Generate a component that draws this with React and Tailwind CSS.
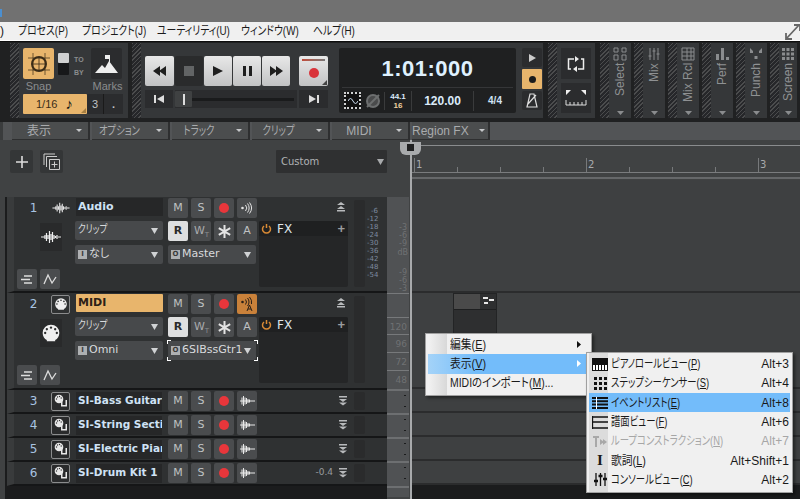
import React from 'react';

const HATCH = 'bg-[repeating-linear-gradient(135deg,#4b4c4d_0px,#4b4c4d_1px,#26272a_1px,#26272a_3px)]';
const JP = 'font-["Liberation_Sans","Noto_Sans_CJK_JP",sans-serif]';
const DV = 'font-["DejaVu_Sans","Noto_Sans_CJK_JP",sans-serif]';
const NL = 'inline-block origin-left scale-x-[.78]';
const NC = 'inline-block origin-center scale-x-[.78]';
const NB = 'inline-block origin-left scale-x-[.82]';
const NK = 'inline-block origin-left scale-x-[.9]';

function Tri({ c = '#d8d8d8', w = 8, h = 5, dir = 'down' }) {
  const p = dir === 'down' ? `0,0 ${w},0 ${w / 2},${h}` : `0,0 ${w},${h / 2} 0,${h}`;
  return <svg width={w} height={h} className="shrink-0"><polygon points={p} fill={c} /></svg>;
}

function Wave({ w = 20, h = 14, c = '#eee' }) {
  return (
    <svg width={w} height={h} viewBox="0 0 20 14">
      <path d="M0 7H4M4 5V9M5.500 3V11M7 5V9M8.500 1V13M10 4V10M11.500 2V12M13 5V9M14.500 6V8M16 5V9M17 7H20" stroke={c} strokeWidth="1.200" fill="none" />
    </svg>
  );
}

const Decay = () => (
  <svg width="15" height="10" viewBox="0 0 15 10" stroke="#e8e8e8" strokeWidth="1"><path d="M0 5h15M2 1.500v7M3.500 0v10M5 1.500v7M6.500 2v6M8 3v4M9.500 3.500v3" /></svg>
);

function Din({ s = 24, c = '#efefef', bg = '#2b2c2d' }) {
  return (
    <svg width={s} height={s} viewBox="0 0 24 24">
      <path d="M12 2a10 10 0 0 1 10 10c0 4-2 7-5 8.500v1.500H7v-1.500C4 19 2 16 2 12A10 10 0 0 1 12 2z" fill={c} />
      {[[5, 12], [7, 7.500], [12, 5.500], [17, 7.500], [19, 12]].map(([x, y]) => <circle key={x} cx={x} cy={y} r="1.400" fill={bg} />)}
    </svg>
  );
}

function InstIcon() {
  return (
    <span className="w-[19px] h-[19px] border border-[#8b8c8d] rounded-[2px] bg-[#2a2b2c] flex items-center justify-center shrink-0">
      <svg width="14" height="14" viewBox="0 0 14 14">
        <path d="M7 6v6.500h6V6h-1.500v5H8.500V6z" fill="#e8e8e8" />
        <circle cx="5" cy="5" r="4.300" fill="#e8e8e8" />
        {[[2.500, 5], [3.500, 3], [5.500, 2.500], [7.200, 4]].map(([x, y]) => <circle key={x} cx={x} cy={y} r=".7" fill="#333" />)}
      </svg>
    </span>
  );
}

function TB({ children, tone = 'bg-[#4a4c4e] text-[#bfc1c3]' }) {
  return <span className={`w-5 h-5 rounded-[2px] text-[11px] flex items-center justify-center shrink-0 relative ${DV} ${tone}`}>{children}</span>;
}

const Rec = () => <TB><span className="w-[10px] h-[10px] rounded-full bg-[#e8363b]" /></TB>;

function Mon({ auto }) {
  return (
    <TB tone={auto ? 'bg-[#c9813a]' : 'bg-[#4a4c4e]'}>
      <svg width="16" height="16" viewBox="0 0 16 16" fill="none" stroke={auto ? '#2a2018' : '#e4e4e4'} strokeWidth="1">
        <circle cx="3.500" cy={auto ? 6 : 8} r="1.300" fill={auto ? '#2a2018' : '#e4e4e4'} stroke="none" />
        <path d={auto ? 'M6.500 3.500a4 4 0 0 1 0 5M8.500 2a6 6 0 0 1 0 8M10.500 1a8 8 0 0 1 2 7' : 'M6.500 5a4.500 4.500 0 0 1 0 6M8.500 3.500a7 7 0 0 1 0 9M10.500 2.500a9 9 0 0 1 0 11'} />
        {auto && <path d="M8 15l2.500-6 2.500 6M9 13h3" />}
      </svg>
    </TB>
  );
}

function Select({ children, tag, w = 'w-[88px]', h = 'h-[19px]' }) {
  return (
    <div className={`${w} ${h} bg-[#47494b] rounded-[2px] flex items-center pl-[3px] pr-[5px] shrink-0`}>
      {tag && <span className={`w-[9px] h-[9px] bg-[#aeb0b2] text-[#3a3a3a] text-[7px] leading-[9px] font-bold text-center mr-[2px] ${DV}`}>{tag}</span>}
      <span className={`flex-1 text-[#d8dadc] text-[11px] whitespace-nowrap ${DV}`}>{children}</span>
      <Tri w={7} h={6} c="#d0d2d4" />
    </div>
  );
}

const SmallBtn = ({ children }) => <span className="w-5 h-5 rounded-[2px] bg-[#4a4c4e] flex items-center justify-center">{children}</span>;

function DblArrow({ up }) {
  return (
    <svg width="10" height="10" viewBox="0 0 10 10" fill="#b8babc">
      {up ? <path d="M5 0l4 3H1zM5 4l4 3H1zM1 8h8v1.500H1z" /> : <path d="M1 0h8v1.500H1zM1 3h8L5 6zM1 6.500h8L5 9.500z" />}
    </svg>
  );
}

function BigTrack({ n, name, big, nameOrange, auto, small, sel, out, scale, inp }) {
  return (
    <div className="flex bg-[#2f3132] border-b-2 border-b-[#151617] border-l-[7px] border-l-[#393b3c] pl-[13px] pt-[1px] h-full">
      <div className="w-[48px] relative shrink-0">
        <div className="flex items-center h-5">
          <span className={`w-[13px] text-center text-[12px] text-[#a9c4e2] ${DV}`}>{n}</span>
          <span className="ml-[11px] w-[19px] flex justify-center">{small}</span>
        </div>
        <div className="ml-[13px] mt-[5px] w-[22px] h-[28px] flex items-center justify-center bg-[#292a2b]">{big}</div>
      </div>
      <div className="w-[88px] flex flex-col shrink-0">
        <div className={`h-[18px] w-[87px] ml-px flex items-center pl-[2px] text-[11px] font-bold ${DV} ${nameOrange ? 'bg-[#e8b56c] text-[#2b2117] rounded-[1px]' : 'bg-[#262728] text-[#cfe2f5]'}`}>{name}</div>
        <div className="mt-[5px]"><Select><span className={NL}>クリップ</span></Select></div>
        <div className="mt-[5px]"><Select tag="I">{inp}</Select></div>
      </div>
      <div className="ml-[5px] w-[89px] flex flex-col shrink-0">
        <div className="flex gap-[3px]"><TB>M</TB><TB>S</TB><Rec /><Mon auto={auto} /></div>
        <div className="flex gap-[3px] mt-[3px]">
          <TB tone="bg-[#dedfe0] text-[#2a2a2a] font-bold">R</TB>
          <TB tone="bg-[#4a4c4e] text-[#a9abad]"><span className="-ml-[3px]">W</span><span className="absolute right-[2px] bottom-[1px] text-[7px] text-[#8c8e90]">T</span></TB>
          <TB>
            <svg width="13" height="13" stroke="#e4e4e4" strokeWidth="2"><path d="M6.500 0v13M.8 3.200l11.400 6.600M12.200 3.200L.8 9.800" /></svg>
          </TB>
          <TB>A</TB>
        </div>
        <div className="mt-[4px] relative">
          <Select tag="O">{out}</Select>
          {sel && <>
            <span className="absolute -left-[1px] -top-[1px] w-[4px] h-[4px] border-l border-t border-white" />
            <span className="absolute -right-[1px] -top-[1px] w-[4px] h-[4px] border-r border-t border-white" />
            <span className="absolute -left-[1px] -bottom-[1px] w-[4px] h-[4px] border-l border-b border-white" />
            <span className="absolute -right-[1px] -bottom-[1px] w-[4px] h-[4px] border-r border-b border-white" />
          </>}
        </div>
      </div>
      <div className="ml-[2px] w-[89px] shrink-0">
        <div className="h-[23px] flex items-start justify-end pr-[2px] pt-[4px]"><DblArrow up /></div>
        <div className="h-[66px] bg-[#252627] rounded-[2px]">
          <div className="h-[15px] bg-[#1f2021] flex items-center pl-[2px] pr-[3px] rounded-t-[2px]">
            <svg width="11" height="11" viewBox="0 0 11 11" fill="none" stroke="#d98a35" strokeWidth="1.500"><path d="M3 3a4 4 0 1 0 5 0M5.500 1v4" /></svg>
            <span className={`ml-[5px] flex-1 text-[#dfe5ea] text-[12px] ${DV}`}>FX</span>
            <span className="text-[#9a9c9e] text-[13px] leading-none font-bold">+</span>
          </div>
        </div>
      </div>
      <div className="ml-[6px] mt-[2px] w-[11px] h-[87px] bg-[#2a2b2c] rounded-[2px] shrink-0" />
      <div className={`ml-[2px] w-[11px] mt-[9px] text-[7px] leading-[8px] text-[#7e8ba0] text-right ${DV}`}>
        {scale && ['-6', '-12', '-18', '-24', '-30', '-36', '-42', '-48', '-54'].map(s => <div key={s}>{s}</div>)}
      </div>
    </div>
  );
}

function SmallTrack({ n, name, val }) {
  return (
    <div className="h-6 flex items-center bg-[#2f3132] border-b-2 border-b-[#151617] border-l-[7px] border-l-[#393b3c] pl-[13px]">
      <span className={`w-[13px] text-center text-[12px] text-[#a9c4e2] ${DV}`}>{n}</span>
      <span className="ml-[11px] w-[19px] flex justify-center"><InstIcon /></span>
      <span className="ml-[6px] w-[86px] h-[19px] bg-[#262728] flex items-center pl-[2px] text-[#cfe2f5] text-[10.500px] font-bold overflow-hidden whitespace-nowrap"><span className={DV}>{name}</span></span>
      <div className="ml-[6px] flex gap-[3px]"><TB>M</TB><TB>S</TB><Rec /><TB><Decay /></TB></div>
      <div className={`w-[76px] text-right text-[9px] text-[#9a9c9e] ${DV}`}>{val}</div>
      <span className="ml-[5px]"><DblArrow /></span>
      <span className="ml-[6px] w-[11px] h-[18px] bg-[#2a2b2c] rounded-[2px]" />
    </div>
  );
}

const Tab = ({ children, narrow, w = 'w-[78px]' }) => (
  <div className={`${w} h-[18px] bg-[#4b4d4e] border-r-2 border-b border-[#2e2f30] flex items-center text-[#a9abad] text-[12px] ${JP}`}>
    <span className="flex-1 text-center pr-[10px] whitespace-nowrap"><span className={narrow ? NC : ''}>{children}</span></span>
    <span className="mr-[6px]"><Tri w={6} h={3} c="#c5c7c9" /></span>
  </div>
);

function TBtn({ children, w = 'w-[28px]', dark }) {
  return <span className={`${w} h-[30px] rounded-[2px] flex items-center justify-center ${dark ? 'bg-[#2a2b2c]' : 'bg-gradient-to-b from-[#e8e8e8] to-[#c2c3c4]'}`}>{children}</span>;
}

const K = '#1f1f1f';

function SidePanel({ label, icon, last }) {
  return (
    <div className={`flex h-full shrink-0 ${last ? 'w-[27px]' : 'w-[31px]'}`}>
      <span className={`w-[9px] ${HATCH}`} />
      <div className="flex-1 bg-[#353739] flex flex-col items-center pt-[4px]">
        <span className="h-[14px] flex items-center">{icon}</span>
        <span className={`[writing-mode:vertical-rl] rotate-180 text-[#8f9193] text-[12px] mt-[2px] h-[41px] whitespace-nowrap text-right ${JP}`}>{label}</span>
        <span className="mt-auto mb-[3px]"><Tri w={7} h={4} c="#8a8c8e" /></span>
      </div>
    </div>
  );
}

const Ico = ({ d, fill }) => <svg width="14" height="14" viewBox="0 0 14 14" fill={fill ? '#8a8c8e' : 'none'} stroke={fill ? 'none' : '#8a8c8e'}><path d={d} /></svg>;

function Toolbar() {
  return (
    <div className="h-[80px] bg-[#202122] flex pl-[10px] pt-[1px] shrink-0 overflow-hidden">
      <div className="w-[118px] h-[75px] bg-[#353739] flex shrink-0">
        <span className={`w-[9px] ${HATCH}`} />
        <div className="pl-[4px] pt-[5px] flex flex-col">
          <div className="flex">
            <span className="w-[31px] h-[31px] rounded-[2px] bg-[#e8b56c] flex items-center justify-center">
              <svg width="24" height="24" viewBox="0 0 24 24" fill="none" stroke="#3a2c18"><path d="M1 6h22M1 18h22M6 1v22M18 1v22" strokeWidth=".7" /><circle cx="12" cy="12" r="7" strokeWidth="2" /><path d="M12 5v14M5 12h14" strokeWidth=".8" /></svg>
            </span>
            <span className="ml-[4px] mt-[5px] w-[11px] h-[22px] bg-[#17181a] rounded-[1px]"><span className="block h-[10px] bg-[#cfd0d1] rounded-[1px]" /></span>
            <span className={`ml-[5px] w-[10px] mt-[5px] text-[7px] text-[#8a8c8e] leading-[13px] font-bold ${JP}`}>TO<br />BY</span>
            <span className="ml-[7px] w-[31px] h-[31px] rounded-[2px] bg-[#2b2c2e] flex items-center justify-center">
              <svg width="26" height="24" viewBox="0 0 26 24" fill="#eee"><path d="M1 21l7-8 3 3 4-7 9 12z" /><rect x="11" y="3" width="5" height="4" /><rect x="15" y="3" width="1" height="7" /></svg>
            </span>
          </div>
          <div className={`flex text-[11px] text-[#8a8c8e] h-[15px] leading-[15px] ${JP}`}>
            <span className="w-[31px] text-center">Snap</span><span className="w-[38px]" /><span className="w-[31px] text-center">Marks</span>
          </div>
          <div className="flex">
            <span className={`relative w-[64px] h-[20px] bg-[#e8b56c] rounded-[1px] flex items-center text-[#3a2c18] text-[11px] pl-[13px] ${JP}`}>1/16<span className="ml-[8px] text-[15px] font-bold text-[#111]">♪</span><span className="absolute right-px bottom-px"><svg width="5" height="5"><path d="M5 0v5H0z" fill="#a67f42" /></svg></span></span>
            <span className="w-[36px] h-[20px] bg-[#2b2c2e] flex text-[#c0c2c4] text-[11px]"><span className="w-[17px] text-center leading-[20px] border-r border-[#1a1a1a]">3</span><span className="flex-1 text-center leading-[20px] font-bold">.</span></span>
          </div>
        </div>
      </div>
      <div className="ml-[4px] w-[411px] h-[75px] bg-[#353739] flex shrink-0">
        <span className={`w-[9px] ${HATCH}`} />
        <div className="pl-[4px] pt-[13px] w-[195px]">
          <div className="flex gap-px">
            <TBtn w="w-[29px]"><svg width="14" height="10" fill={K}><path d="M7 0v10L0 5zM13 0v10L6 5z" /></svg></TBtn>
            <TBtn dark><span className="w-[10px] h-[10px] bg-[#626465]" /></TBtn>
            <TBtn><svg width="10" height="10" fill={K}><path d="M0 0l10 5-10 5z" /></svg></TBtn>
            <TBtn><svg width="9" height="10" fill={K}><path d="M0 0h3v10H0zM6 0h3v10H6z" /></svg></TBtn>
            <TBtn><svg width="13" height="10" fill={K}><path d="M0 0l7 5-7 5zM6 0l7 5-7 5z" /></svg></TBtn>
            <span className="ml-[8px]"><TBtn w="w-[29px]">
              <span className="relative w-full h-full flex items-center justify-center"><span className="w-[10px] h-[10px] rounded-full bg-[#d9333a] mt-[3px]" /><span className="absolute left-[3px] right-[3px] top-[3px] h-[2px] bg-gradient-to-r from-[#c04a3a] to-[#777]" /><span className="absolute right-[1px] bottom-[1px]"><svg width="5" height="5"><path d="M5 0v5H0z" fill="#444" /></svg></span></span>
            </TBtn></span>
          </div>
          <div className="flex mt-[4px] h-[18px]">
            <span className="w-[28px] bg-[#2b2c2e] flex items-center justify-center"><svg width="10" height="8" fill="#ddd"><path d="M0 0h2v8H0zM10 0v8L3 4z" /></svg></span>
            <span className="ml-[2px] w-[122px] bg-[#2b2c2e] flex items-center">
              <span className="w-[17px] h-[16px] bg-[#3f4142] rounded-[1px] flex justify-center items-center"><span className="w-[2px] h-[11px] bg-[#ddd]" /></span>
              <span className="w-[102px] h-[3px] bg-[#1a1b1c]" />
            </span>
            <span className="ml-[2px] w-[29px] bg-[#2b2c2e] flex items-center justify-center"><svg width="10" height="8" fill="#ddd"><path d="M0 0l7 4-7 4zM8 0h2v8H8z" /></svg></span>
          </div>
        </div>
        <div className="ml-[3px] mt-[5px] w-[177px] h-[65px] bg-[#1f2021] rounded-[2px] flex flex-col shrink-0">
          <div className="h-[40px] border-b border-[#353638] mx-[3px] flex items-center justify-center text-[#dff1ff] text-[22px] font-bold font-['Liberation_Sans',sans-serif] tracking-[.5px] pt-[5px] pb-[3px]">1:01:000</div>
          <div className={`flex-1 flex items-center text-[#dbeafa] font-bold ${JP}`}>
            <span className="ml-[5px] w-[17px] h-[17px] bg-[#111] border-2 border-dotted border-[#cfd0d1] flex items-center justify-center"><svg width="10" height="6" fill="none" stroke="#cfe2f5"><path d="M0 3q2.500-5 5 0t5 0" /></svg></span>
            <svg className="ml-[4px]" width="16" height="16" fill="none" stroke="#6d6f70" strokeWidth="2"><circle cx="8" cy="8" r="6" fill="#4a4b4c" /><path d="M2 14L14 2" /></svg>
            <span className="ml-[3px] w-[27px] text-[8px] leading-[9px] text-center border-l border-[#3a3b3c]">44.1<br /><span className="text-[#f0d0a0]">16</span></span>
            <span className="w-[62px] h-[20px] leading-[20px] text-center text-[12px] border-l border-[#3a3b3c]">120.00</span>
            <span className="flex-1 h-[20px] leading-[20px] text-center text-[10px] border-l border-[#3a3b3c] text-[#cfe2f5]">4/4</span>
          </div>
        </div>
        <div className="ml-[6px] mt-[5px] w-[20px] flex flex-col gap-[2px]">
          <span className="h-[19px] bg-[#2b2c2e] rounded-[2px] flex items-center justify-center"><svg width="7" height="8" fill="#ccc"><path d="M0 0l7 4-7 4z" /></svg></span>
          <span className="h-[20px] bg-[#e8b56c] rounded-[1px] flex items-center justify-center"><span className="w-[7px] h-[7px] bg-[#1c1c1c] rounded-full" /></span>
          <span className="h-[19px] bg-[#2b2c2e] rounded-[2px] flex items-center justify-center"><svg width="12" height="15" fill="none" stroke="#ddd" strokeWidth="1.200"><path d="M4 1h4l3 13H1zM2 11l8-9" /></svg></span>
        </div>
      </div>
      <div className="ml-[5px] w-[47px] h-[75px] bg-[#353739] flex shrink-0">
        <span className={`w-[9px] ${HATCH}`} />
        <div className="ml-[4px] mt-[5px] flex flex-col gap-[4px]">
          <span className="w-[30px] h-[31px] bg-[#2b2c2e] flex items-center justify-center"><svg width="18" height="16" fill="none" stroke="#eee" strokeWidth="1.500"><path d="M7 3H1.500v10H4M11 13h5.500V3H14" /><path d="M8 0l4 3-4 3zM10 10l-4 3 4 3z" fill="#eee" stroke="none" /></svg></span>
          <span className="w-[30px] h-[30px] bg-[#2b2c2e] flex items-center justify-center"><svg width="22" height="16" fill="none" stroke="#ddd"><path d="M1 0h5L1 5zM21 0h-5l5 5z" fill="#eee" stroke="none" /><path d="M1 10v5h20v-5M5 12v3M9 12v3M13 12v3M17 12v3" /></svg></span>
        </div>
      </div>
      <div className="ml-[5px] h-[75px] flex gap-[3px]">
        <SidePanel label="Select" icon={<Ico d="M1 1h4v4H1zM9 1h4v4H9zM1 8h4v5H1zM9 8h4v5H9z" />} />
        <SidePanel label="Mix" icon={<Ico d="M3 1v12M7 1v12M11 1v12M1.500 9h3M5.500 4h3M9.500 7h3" />} />
        <SidePanel label="Mix Rcl" icon={<Ico d="M1 1h12v12H1zM1 5h12M1 9h12M6 1v12M10 1v12" />} />
        <SidePanel label="Perf" icon={<Ico fill d="M1 7h3v6H1zM6 1h3v12H6zM11 10h3v3h-3z" />} />
        <SidePanel label="Punch" icon={<Ico fill d="M1 1l3 3v2H1zM13 1l-3 3v2h3zM5.500 9h3v3h-3z" />} />
        <SidePanel last label="Screen" icon={<Ico fill d="M1 1h3v3H1zM5.500 1h3v3h-3zM10 1h3v3h-3zM1 5.500h3v3H1zM5.500 5.500h3v3h-3zM10 5.500h3v3h-3zM1 10h3v3H1zM5.500 10h3v3h-3zM10 10h3v3h-3z" />} />
      </div>
    </div>
  );
}

function Item({ label, u, tail, sc, hi, dis, icon, arrow, n = NL }) {
  return (
    <div className={`relative h-[19.300px] flex items-center pr-[1px] pl-[22px] whitespace-nowrap text-[12px] leading-none ${dis ? 'text-[#a6a6a6]' : 'text-[#1a1a1a]'} ${hi ? 'bg-[#73bcfa]' : ''}`}>
      {icon && <span className="absolute left-[1px] w-[20px] flex justify-center">{icon}</span>}
      <span className="flex-1"><span className={n}>{label}(<span className="underline">{u}</span>){tail}</span></span>
      {sc && <span className="text-[12px]">{sc}</span>}
      {arrow && <span className="absolute right-[8px]"><Tri dir="right" w={4} h={7} c={arrow} /></span>}
    </div>
  );
}

function Menus() {
  const black = '#111';
  return (
    <>
      <div className={`absolute left-[425px] top-[333px] w-[167px] h-[63px] bg-[#f0f0f0] border border-[#a0a0a0] shadow-[2px_2px_3px_rgba(0,0,0,.45)] pt-[1px] px-[2px] ${JP}`}>
        <span className="absolute left-[2px] top-0 bottom-0 w-[19px] bg-gradient-to-r from-[#f2f2f2] to-[#d8d8d8]" />
        <Item n={NK} label="編集" u="E" arrow="#111" />
        <div className="relative bg-gradient-to-r from-[#a4d3f8] to-[#73bcfa] to-30%"><Item n={NK} label="表示" u="V" arrow="#fff" /></div>
        <Item n="inline-block origin-left scale-x-[.87]" label="MIDIのインポート" u="M" tail="..." />
      </div>
      <div className={`absolute left-[586px] top-[352px] w-[207px] h-[141px] bg-[#f0f0f0] border border-[#a0a0a0] shadow-[2px_2px_3px_rgba(0,0,0,.45)] pt-[1.500px] px-[2px] ${JP}`}>
        <span className="absolute left-[2px] top-0 bottom-0 w-[19px] bg-[#dcdcdc]" />
        <Item label="ピアノロールビュー" u="P" sc="Alt+3" icon={<svg width="16" height="13" fill={black}><path d="M0 0h16v13H0z" /><path d="M1 7h2v5H1zM4 7h2v5H4zM7 7h2v5H7zM10 7h2v5h-2zM13 7h2v5h-2z" fill="#fff" /></svg>} />
        <Item label="ステップシーケンサー" u="S" sc="Alt+4" icon={<svg width="13" height="13" fill={black}><path d="M0 0h3v3H0zM5 0h3v3H5zM10 0h3v3h-3zM0 5h3v3H0zM5 5h3v3H5zM10 5h3v3h-3zM0 10h3v3H0zM5 10h3v3H5zM10 10h3v3h-3z" /></svg>} />
        <Item hi label="イベントリスト" u="E" sc="Alt+8" icon={<svg width="16" height="12" fill={black}><path d="M0 0h16v2H0zM0 3.300h16v2H0zM0 6.600h16v2H0zM0 10h16v2H0z" /><path d="M4 0h1v12H4z" fill="#fff" /></svg>} />
        <Item label="譜面ビュー" u="F" sc="Alt+6" icon={<svg width="16" height="13" fill="none" stroke={black}><path d="M.500 0v13M0 1h16M0 6h16M0 12h16" strokeWidth="1.300" /></svg>} />
        <Item dis label="ループコンストラクション" u="N" sc="Alt+7" icon={<svg width="15" height="13" fill="#a8a8a8"><path d="M0 1h6v2H4v9H2V3H0zM7 4l4 3-4 3zM10 4l4 3-4 3z" /></svg>} />
        <Item n={NK} label="歌詞" u="L" sc="Alt+Shift+1" icon={<span className="font-['Liberation_Serif',serif] font-bold text-[15px] leading-none">I</span>} />
        <Item label="コンソールビュー" u="C" sc="Alt+2" icon={<svg width="13" height="13" fill="none" stroke={black} strokeWidth="1.300"><path d="M2 0v13M6.500 0v13M11 0v13" /><path d="M0 8h4M4.500 3h4M9 6h4" strokeWidth="2.500" /></svg>} />
      </div>
    </>
  );
}

const Laneline = ({ h, children }) => <div className={`${h} border-b-2 border-[#2b2c2d] relative`}>{children}</div>;

export default function App() {
  const ops = [<svg key="a" width="12" height="9" stroke="#ddd" strokeWidth="1.500"><path d="M3 1h8M0 4.500h9M3 8h8" /></svg>, <svg key="b" width="14" height="12" fill="none" stroke="#ddd" strokeWidth="1.300"><path d="M1 11L5 2l4 8 4-6" /></svg>];
  return (
    <div className={`relative w-[800px] h-[499px] overflow-hidden bg-[#3e4041] [font-feature-settings:"palt"] ${JP}`}>
      <div className="h-[22px] bg-[#717171] relative shrink-0"><span className="absolute left-0 top-[9px] w-[2px] h-[8px] border border-[#4b8fd0]" /></div>
      <div className="h-[19px] bg-[#f0f0f0] border-b border-white flex items-center text-[12px] text-[#1a1a1a] relative">
        <span className="w-[18px]">)</span>
        <span className="w-[64px] whitespace-nowrap"><span className={NB}>プロセス(P)</span></span>
        <span className="w-[75px] whitespace-nowrap"><span className={NB}>プロジェクト(J)</span></span>
        <span className="w-[84px] whitespace-nowrap"><span className={NB}>ユーティリティ(U)</span></span>
        <span className="w-[72px] whitespace-nowrap"><span className={NB}>ウィンドウ(W)</span></span>
        <span className="whitespace-nowrap"><span className={NB}>ヘルプ(H)</span></span>
        <svg className="absolute right-0 top-[1px]" width="16" height="17" fill="none" stroke="#666" strokeWidth="1.800"><path d="M2 16L15 2M2 10v6h6M10 2h6v6" /></svg>
      </div>
      <div className="h-px bg-[#0e0e0e]" />
      <Toolbar />
      <div className="h-[18px] bg-[#525456] flex pl-[9px] border-l-[3px] border-[#3a3c3d]">
        <div className="flex -ml-[3px] pl-[3px]">
          <Tab>表示</Tab><div className="w-[2px]" /><Tab narrow>オプション</Tab><div className="w-[2px]" /><Tab narrow>トラック</Tab><div className="w-[2px]" /><Tab narrow>クリップ</Tab><div className="w-[2px]" /><Tab>MIDI</Tab><div className="w-[2px]" /><Tab>Region FX</Tab>
        </div>
      </div>
      <div className="flex h-[359px]">
        <div className="w-[410px] shrink-0 flex flex-col bg-[#404243] pl-[3px]">
          <div className="h-[57px] shrink-0 flex items-start pl-[7px] pt-[10px]">
            <span className="w-[23px] h-[23px] bg-[#343637] rounded-[2px] flex items-center justify-center text-[#e0e0e0]"><svg width="12" height="12" stroke="#ddd" strokeWidth="1.600"><path d="M6 0v12M0 6h12" /></svg></span>
            <span className="ml-[7px] w-[23px] h-[23px] bg-[#343637] rounded-[2px] flex items-center justify-center"><svg width="17" height="17" fill="none" stroke="#ccc"><path d="M1 12V1h11" /><path d="M3.500 14V3.500H14" /><path d="M6.500 6.500h10v10h-10zM11.500 8.500v6M8.500 11.500h6" /></svg></span>
            <div className={`ml-[213px] w-[111px] h-[23px] bg-[#2f3031] rounded-[1px] flex items-center pl-[5px] pr-[3px] text-[#b0b2b4] text-[10px] ${DV}`}><span className="flex-1">Custom</span><Tri w={7} h={6} c="#a8aaac" /></div>
          </div>
          <div className="flex-1 relative">
            <div className="absolute top-0 bottom-0 left-[2px] w-[382px] bg-[#1b1c1d]" />
            <div className="relative ml-[4px] w-[381px] flex flex-col">
              <div className="h-[96px]"><BigTrack n="1" name="Audio" scale big={<Wave w={20} h={20} />} small={<Wave w={18} h={12} />} inp="なし" out="Master" /></div>
              <div className="h-[97px]"><BigTrack n="2" name="MIDI" nameOrange auto big={<Din s={20} />} small={<span className="w-[19px] h-[19px] border border-[#8b8c8d] rounded-[2px] flex items-center justify-center"><Din s={14} /></span>} inp="Omni" out="6SIBssGtr1" sel /></div>
              <SmallTrack n="3" name="SI-Bass Guitar" />
              <SmallTrack n="4" name="SI-String Secti" />
              <SmallTrack n="5" name="SI-Electric Piar" />
              <SmallTrack n="6" name="SI-Drum Kit 1" val="-0.4" />
            </div>
            <div className="absolute left-[14px] top-[72px] flex gap-[3px]"><SmallBtn>{ops[0]}</SmallBtn><SmallBtn>{ops[1]}</SmallBtn></div>
            <div className="absolute left-[14px] top-[168px] flex gap-[3px]"><SmallBtn>{ops[0]}</SmallBtn><SmallBtn>{ops[1]}</SmallBtn></div>
            <div className={`absolute left-[384px] top-0 w-[22px] h-[300px] bg-[#505254] text-[#6f7173] text-[8px] leading-[8px] ${DV}`}>
              <div className="absolute right-[2px] top-[27px] text-right">-3<br />-6<br />-9</div>
              <div className="absolute right-[1px] top-[52px]">dB</div>
              <div className="absolute right-[2px] top-[72px] text-right">-9<br />-6<br />-3</div>
              <div className="absolute inset-x-0 top-[96px] border-t border-[#77797b]" />
              {[{ t: 120, v: '120' }, { t: 137, v: '96' }, { t: 155, v: '72' }, { t: 173, v: '48' }].map(r => <div key={r.v} className="absolute inset-x-0 text-right pr-[2px] border-t border-[#77797b] pt-[5px] text-[9px]" style={{ top: r.t }}>{r.v}</div>)}
              {[192, 216, 240, 264, 289].map(t => <div key={t} className="absolute inset-x-0 border-t-2 border-[#6d6f71]" style={{ top: t }} />)}
              {[198, 209, 222, 233, 246, 257, 270, 281].map(t => <span key={t} className="absolute right-[3px] w-[2px] h-px bg-[#1b1c1d]" style={{ top: t }} />)}
            </div>
          </div>
        </div>
        <div className="flex-1 bg-[#3e4041] flex flex-col relative border-l border-[#9b9d9f]">
          <div className="h-[40px] bg-[#404243] relative">
            <div className="absolute inset-x-0 top-[5px] h-px bg-[#8a8c8e]" />
            <div className="absolute inset-x-0 top-[32px] h-px bg-[#7a7c7e]" />
            <div className="absolute inset-x-0 top-[37px] h-[2px] bg-[#66686a]" />
            {[[3, '1'], [175, '2'], [347, '3']].map(([x, t]) => <span key={t} className={`absolute top-[18px] text-[10px] text-[#a8aaac] border-l border-[#77797b] pl-[1px] h-[14px] leading-[14px] ${DV}`} style={{ left: x }}>{t}</span>)}
            {[46, 89, 132, 218, 261, 304].map(x => <span key={x} className="absolute top-[27px] w-px h-[5px] bg-[#77797b]" style={{ left: x }} />)}
          </div>
          <div className="h-[17px]" />
          <Laneline h="h-[96px]" />
          <Laneline h="h-[96px]">
            <div className="absolute left-[42px] top-0 w-[44px] h-[41px] bg-[#2e2f30] border border-[#232425]">
              <div className="h-[16px] bg-[#4a4a4a] border-b border-[#1e1f20] flex justify-end">
                <span className="w-[16px] bg-[#2e2f30] pl-[3px] pt-[2px]"><svg width="11" height="9" fill="#e8e8e8"><path d="M0 1h5v2H0zM6 3h5v2H6zM1 6h4v2H1z" /></svg></span>
              </div>
            </div>
          </Laneline>
          <Laneline h="h-6" /><Laneline h="h-6" /><Laneline h="h-6" /><Laneline h="h-6" />
          <div className="flex-1 bg-[#1b1c1d]" />
        </div>
      </div>
      <div className="absolute left-[410px] top-[140px] bottom-0 w-[2px] bg-[#a8aaac]" />
      <div className="absolute left-[400px] top-[142px] w-[21px] h-[13px] bg-[#a9abad] rounded-b-[6px] flex justify-center pt-[2px]"><span className="w-[7px] h-[7px] bg-[#1f2021]" /></div>
      <Menus />
    </div>
  );
}
